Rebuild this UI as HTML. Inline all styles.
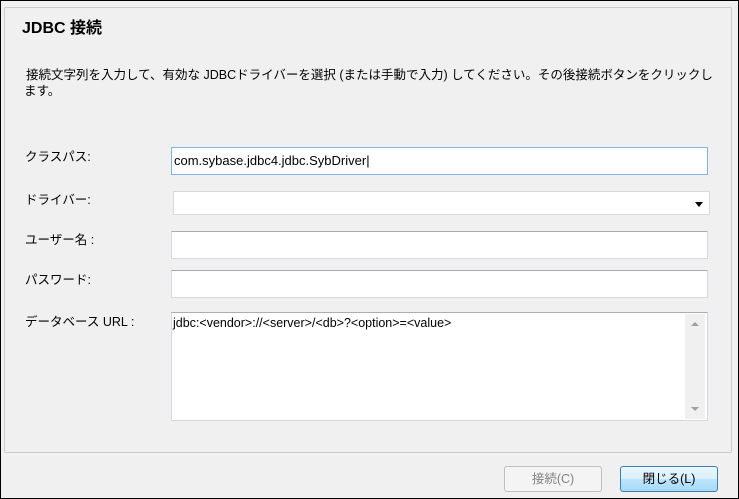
<!DOCTYPE html>
<html><head><meta charset="utf-8"><style>
*{box-sizing:border-box;margin:0;padding:0}
body{width:739px;height:499px;background:#f0f0f0;position:relative;overflow:hidden;font-family:"Liberation Sans","Noto Sans CJK JP",sans-serif;font-size:12.5px;color:#000}
.frame{position:absolute;left:0;top:0;width:739px;height:499px;border:1px solid #000;pointer-events:none}
.panel{position:absolute;left:4px;top:7px;width:728px;height:446px;border:1px solid #c9c9c9;border-radius:2px;background:#f0f0f0}
.t{position:absolute;white-space:nowrap}
.in{position:absolute;background:#fff;border:1px solid #d5d9de;border-top-color:#abadb3}
.btn{position:absolute;height:26px;width:98px;border:1px solid #adadad;border-radius:3px;text-align:center;line-height:24px;font-size:12.5px}
</style></head><body>
<div class="panel"></div>
<div class="t" style="left:22px;top:14px;font-size:16px;font-weight:bold">JDBC 接続</div>
<div class="t" style="left:26px;top:64px">接続文字列を入力して、有効な JDBCドライバーを選択 (または手動で入力) してください。その後接続ボタンをクリックし</div>
<div class="t" style="left:24px;top:80px">ます。</div>
<div class="t" style="left:25px;top:146px">クラスパス:</div>
<div class="t" style="left:25px;top:189px">ドライバー:</div>
<div class="t" style="left:25px;top:229px">ユーザー名 :</div>
<div class="t" style="left:25px;top:269px">パスワード:</div>
<div class="t" style="left:25px;top:311px">データベース URL :</div>
<div class="in" style="left:171px;top:147px;width:537px;height:28px;border-color:#7eb4ea;padding:3px 2px;font-size:13px;line-height:20px">com.sybase.jdbc4.jdbc.SybDriver|</div>
<div class="in" style="left:173px;top:191px;width:537px;height:24px;border-color:#d9d9d9"><div style="position:absolute;right:6px;top:10px;width:0;height:0;border-left:4px solid transparent;border-right:4px solid transparent;border-top:5px solid #000"></div></div>
<div class="in" style="left:171px;top:231px;width:537px;height:28px"></div>
<div class="in" style="left:171px;top:270px;width:537px;height:28px"></div>
<div class="in" style="left:171px;top:312px;width:537px;height:109px;padding:3px 1px;font-size:12.5px">jdbc:&lt;vendor&gt;://&lt;server&gt;/&lt;db&gt;?&lt;option&gt;=&lt;value&gt;
<div style="position:absolute;right:2px;top:1px;width:20px;height:105px;background:#f0f0f0"><div style="position:absolute;left:6px;top:8px;border-left:4px solid transparent;border-right:4px solid transparent;border-bottom:4px solid #a0a0a0"></div><div style="position:absolute;left:6px;bottom:8px;border-left:4px solid transparent;border-right:4px solid transparent;border-top:4px solid #a0a0a0"></div></div></div>
<div class="btn" style="left:504px;top:466px;background:#f4f4f4;color:#838383;border-color:#bfbfbf">接続(C)</div>
<div class="btn" style="left:620px;top:466px;background:linear-gradient(#eaf6fd,#d9f0fc 50%,#bee6fd 50%,#a7d9f5);border-color:#3c7fb1">閉じる(L)</div>
<div class="frame"></div>
</body></html>
